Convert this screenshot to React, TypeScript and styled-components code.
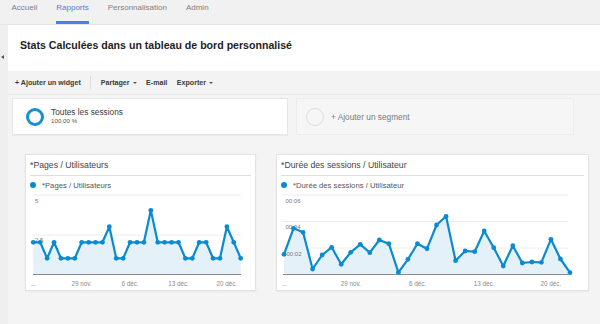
import React from "react";
import styled, { createGlobalStyle } from "styled-components";

const Global = createGlobalStyle`
  html, body { margin: 0; padding: 0; }
  body { background: #f4f4f4; font-family: "Liberation Sans", Arial, sans-serif; }
  * { box-sizing: border-box; }
`;

const Page = styled.div`
  width: 600px;
  height: 324px;
  overflow: hidden;
  display: flex;
  flex-direction: column;
  background: #f4f4f4;
`;

const Nav = styled.nav`
  height: 25px;
  flex: none;
  display: flex;
  padding-left: 2px;
  background: #f1f1f1;
  border-bottom: 1px solid #e4e4e4;
`;

const Tab = styled.div<{ $active?: boolean }>`
  position: relative;
  height: 24px;
  padding: 3px 9.5px 0;
  font-size: 8px;
  line-height: 9px;
  color: ${(p) => (p.$active ? "#4a7fdc" : "#808080")};
  &::after {
    content: "";
    display: ${(p) => (p.$active ? "block" : "none")};
    position: absolute;
    left: 9px;
    right: 9px;
    bottom: 0;
    height: 3px;
    background: #4a80e4;
  }
`;

const Body = styled.div`
  flex: 1;
  display: flex;
  min-height: 0;
`;

const SideStrip = styled.div`
  width: 8px;
  flex: none;
  background: #efefef;
  padding-top: 30px;
  padding-left: 1px;
`;

const Collapse = styled.div`
  width: 0;
  height: 0;
  border-top: 2px solid transparent;
  border-bottom: 2px solid transparent;
  border-right: 3px solid #555;
`;

const Main = styled.div`
  flex: 1;
  display: flex;
  flex-direction: column;
  min-width: 0;
`;

const TitleBar = styled.header`
  height: 46px;
  flex: none;
  background: #fff;
  padding: 14px 0 0 12px;
`;

const Title = styled.h1`
  margin: 0;
  font-size: 10.6px;
  line-height: 12px;
  font-weight: bold;
  color: #1e1e1e;
`;

const Toolbar = styled.div`
  height: 24px;
  flex: none;
  display: flex;
  align-items: center;
  gap: 9.5px;
  padding-left: 7px;
  background: #f3f3f3;
  border-bottom: 1px solid #ececec;
`;

const ToolButton = styled.span<{ $menu?: boolean }>`
  display: inline-flex;
  align-items: center;
  gap: 3px;
  font-size: 7.1px;
  font-weight: bold;
  color: #3a3a3a;
  &::after {
    content: "";
    display: ${(p) => (p.$menu ? "block" : "none")};
    width: 0;
    height: 0;
    border-left: 2px solid transparent;
    border-right: 2px solid transparent;
    border-top: 2px solid #555;
  }
`;

const ToolSep = styled.span`
  width: 1px;
  height: 13px;
  background: #dcdcdc;
`;

const Segments = styled.div`
  display: flex;
  gap: 8px;
  padding: 3px 0 0 4px;
  flex: none;
`;

const SegmentCard = styled.div<{ $empty?: boolean; $w: number }>`
  width: ${(p) => p.$w}px;
  height: 37px;
  display: flex;
  align-items: center;
  gap: 7px;
  padding-left: 13px;
  background: ${(p) => (p.$empty ? "#f6f6f6" : "#fff")};
  border: 1px solid ${(p) => (p.$empty ? "#ececec" : "#e6e6e6")};
  box-shadow: ${(p) => (p.$empty ? "none" : "0 1px 1px rgba(0,0,0,0.04)")};
`;

const Ring = styled.div<{ $empty?: boolean }>`
  width: 18px;
  height: 18px;
  flex: none;
  border-radius: 50%;
  border: ${(p) => (p.$empty ? "1.5px solid #dedede" : "3px solid #1a8fd0")};
  margin-left: ${(p) => (p.$empty ? "-4px" : "0")};
`;

const SegText = styled.div`
  display: flex;
  flex-direction: column;
`;

const SegName = styled.span<{ $muted?: boolean }>`
  font-size: 8.3px;
  line-height: 10px;
  color: ${(p) => (p.$muted ? "#7a7a7a" : "#3a3a3a")};
  margin-top: ${(p) => (p.$muted ? "0" : "-2px")};
`;

const SegSub = styled.span`
  font-size: 6.2px;
  line-height: 8px;
  color: #555;
`;

const Widgets = styled.div`
  display: grid;
  grid-template-columns: 231px 313px;
  gap: 20px;
  padding: 19px 0 0 17px;
`;

const Card = styled.section`
  height: 137px;
  background: #fff;
  border: 1px solid #e3e3e3;
  box-shadow: 0 1px 2px rgba(0, 0, 0, 0.05);
  display: flex;
  flex-direction: column;
`;

const CardTitle = styled.div`
  height: 21px;
  margin: 0 4px;
  padding: 5px 0 0 0;
  font-size: 8.7px;
  line-height: 10px;
  color: #444;
  border-bottom: 1px solid #dedede;
`;

const Legend = styled.div`
  height: 17px;
  display: flex;
  align-items: center;
  gap: 6px;
  padding: 1px 0 0 4px;
  font-size: 7.7px;
  color: #555;
`;

const LegendDot = styled.span`
  width: 6px;
  height: 6px;
  border-radius: 50%;
  background: #0a8ad0;
`;

const ChartSvg = styled.svg`
  display: block;
`;

type ChartProps = {
  width: number;
  xs: number[];
  ys: number[];
  grid: number[];
  gridX: [number, number];
  yLabels: { text: string; x: number; y: number }[];
  xLabels: { text: string; x: number }[];
};

const BLUE = "#0a8ad0";

function Chart({ width, xs, ys, grid, gridX, yLabels, xLabels }: ChartProps) {
  const base = 81.5;
  const pts = xs.map((x, i) => `${x},${ys[i]}`).join(" ");
  const area = `${xs[0]},${base} ${pts} ${xs[xs.length - 1]},${base}`;
  return (
    <ChartSvg width={width} height={97} viewBox={`0 0 ${width} 97`}>
      {grid.map((g) => (
        <line key={g} x1={gridX[0]} x2={gridX[1]} y1={g} y2={g} stroke="#ececec" strokeWidth={1} />
      ))}
      <polygon points={area} fill="#e5f1f9" />
      <line x1={gridX[0]} x2={gridX[1]} y1={base} y2={base} stroke="#8a8a8a" strokeWidth={1} />
      {yLabels.map((l) => (
        <text key={l.text} x={l.x} y={l.y} fontSize={6} fill="#777" fontFamily="Liberation Sans, Arial, sans-serif">
          {l.text}
        </text>
      ))}
      <polyline points={pts} fill="none" stroke={BLUE} strokeWidth={2.2} strokeLinejoin="round" />
      {xs.map((x, i) => (
        <circle key={i} cx={x} cy={ys[i]} r={2.4} fill={BLUE} />
      ))}
      {xLabels.map((l) => (
        <text
          key={l.text}
          x={l.x}
          y={92.5}
          fontSize={6.3}
          fill="#8a8a8a"
          textAnchor={l.text === "..." ? "start" : "middle"}
          fontFamily="Liberation Sans, Arial, sans-serif"
        >
          {l.text}
        </text>
      ))}
    </ChartSvg>
  );
}

const levels1 = [3, 3, 2, 3, 2, 2, 2, 3, 3, 3, 3, 4, 2, 2, 3, 3, 3, 5, 3, 3, 3, 3, 2, 2, 3, 3, 2, 2, 4, 3, 2];
const levelY: Record<number, number> = { 2: 65.3, 3: 49.3, 4: 33.7, 5: 17.3 };
const xs1 = levels1.map((_, i) => 7.3 + i * 6.913);
const ys1 = levels1.map((l) => levelY[l]);

const page2 = [
  254.3, 228.3, 232.3, 269, 255, 247.3, 264.3, 252.3, 244.3, 252.7, 240, 243.7, 272.3, 259.3, 243.7, 248.7, 225,
  216.3, 260.7, 251, 251.7, 231, 247.7, 266, 245.7, 263, 262, 262.3, 239.3, 259, 272.7,
];
const xs2 = page2.map((_, i) => 7 + i * 9.533);
const ys2 = page2.map((y) => y - 193);

export default function App() {
  return (
    <>
      <Global />
      <Page>
        <Nav>
          <Tab>Accueil</Tab>
          <Tab $active>Rapports</Tab>
          <Tab>Personnalisation</Tab>
          <Tab>Admin</Tab>
        </Nav>
        <Body>
          <SideStrip>
            <Collapse />
          </SideStrip>
          <Main>
            <TitleBar>
              <Title>Stats Calculées dans un tableau de bord personnalisé</Title>
            </TitleBar>
            <Toolbar>
              <ToolButton>+ Ajouter un widget</ToolButton>
              <ToolSep />
              <ToolButton $menu>Partager</ToolButton>
              <ToolButton>E-mail</ToolButton>
              <ToolButton $menu>Exporter</ToolButton>
            </Toolbar>
            <Segments>
              <SegmentCard $w={276}>
                <Ring />
                <SegText>
                  <SegName>Toutes les sessions</SegName>
                  <SegSub>100,00 %</SegSub>
                </SegText>
              </SegmentCard>
              <SegmentCard $w={278} $empty>
                <Ring $empty />
                <SegName $muted>+ Ajouter un segment</SegName>
              </SegmentCard>
            </Segments>
            <Widgets>
              <Card>
                <CardTitle>*Pages / Utilisateurs</CardTitle>
                <Legend>
                  <LegendDot />
                  *Pages / Utilisateurs
                </Legend>
                <Chart
                  width={229}
                  xs={xs1}
                  ys={ys1}
                  grid={[2, 42]}
                  gridX={[7, 215]}
                  yLabels={[
                    { text: "5", x: 9, y: 9.5 },
                    { text: "2,5", x: 9, y: 48.5 },
                  ]}
                  xLabels={[
                    { text: "...", x: 5 },
                    { text: "29 nov.", x: xs1[7] },
                    { text: "6 déc.", x: xs1[14] },
                    { text: "13 déc.", x: xs1[21] },
                    { text: "20 déc.", x: xs1[28] },
                  ]}
                />
              </Card>
              <Card>
                <CardTitle>*Durée des sessions / Utilisateur</CardTitle>
                <Legend>
                  <LegendDot />
                  *Durée des sessions / Utilisateur
                </Legend>
                <Chart
                  width={311}
                  xs={xs2}
                  ys={ys2}
                  grid={[2, 28.5, 55]}
                  gridX={[6, 291]}
                  yLabels={[
                    { text: "00:06", x: 8.5, y: 9.5 },
                    { text: "00:04", x: 8.5, y: 35.5 },
                    { text: "00:02", x: 9.5, y: 62.5 },
                  ]}
                  xLabels={[
                    { text: "...", x: 5 },
                    { text: "29 nov.", x: xs2[7] },
                    { text: "6 déc.", x: xs2[14] },
                    { text: "13 déc.", x: xs2[21] },
                    { text: "20 déc.", x: xs2[28] },
                  ]}
                />
              </Card>
            </Widgets>
          </Main>
        </Body>
      </Page>
    </>
  );
}
